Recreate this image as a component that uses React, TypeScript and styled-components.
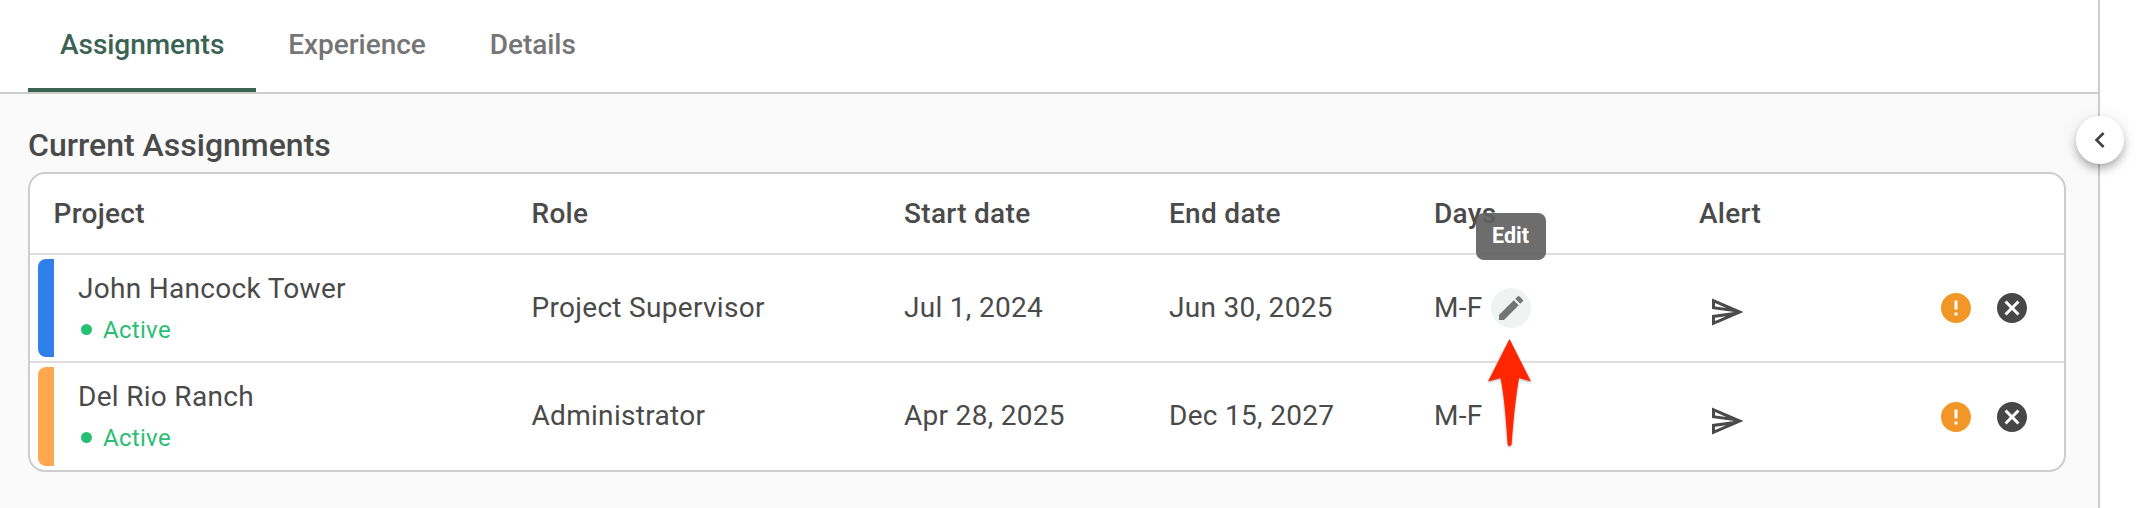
import React from 'react';
import styled, { createGlobalStyle } from 'styled-components';
import { MdCancel, MdChevronLeft, MdEdit, MdError, MdOutlineSend } from 'react-icons/md';

const GlobalStyle = createGlobalStyle`
  *, *::before, *::after { box-sizing: border-box; }
  body { margin: 0; background: #fff; font-family: Roboto, "Liberation Sans", sans-serif; color: #4a4a4a; }
  button { border: 0; padding: 0; margin: 0; background: none; font: inherit; color: inherit; }
  svg { display: block; flex: none; }
`;

const Page = styled.div`
  display: flex;
  width: 2136px;
  height: 508px;
  overflow: hidden;
`;

const Panel = styled.main`
  display: flex;
  flex-direction: column;
  width: 2100px;
  border-right: 2px solid #cdcdcd;
  background: #fafafa;
`;

const Rail = styled.aside`
  position: relative;
  flex: 1;
  background: #fff;
`;

const CollapseButton = styled.button`
  position: absolute;
  top: 116px;
  left: -24px;
  display: flex;
  align-items: center;
  justify-content: center;
  width: 48px;
  height: 48px;
  border-radius: 50%;
  background: #fff;
  color: #424242;
  box-shadow: 0 6px 10px -2px rgba(0, 0, 0, 0.2), 0 4px 10px rgba(0, 0, 0, 0.14), 0 2px 20px rgba(0, 0, 0, 0.08);
`;

const Tabs = styled.nav`
  display: flex;
  height: 94px;
  padding-left: 28px;
  border-bottom: 2px solid #cdcdcd;
  background: #fff;
`;

const Tab = styled.button<{ $active?: boolean }>`
  padding: 2px 32px 0;
  border-bottom: 4px solid ${(p) => (p.$active ? '#3b6353' : 'transparent')};
  color: ${(p) => (p.$active ? '#3b6353' : '#757575')};
  font-size: 28px;
  font-weight: 500;
  line-height: 86px;
  letter-spacing: -0.04px;
`;

const Section = styled.section`
  padding: 32px 32px 0 28px;
`;

const Heading = styled.h2`
  margin: 0 0 6px;
  height: 40px;
  font-size: 32px;
  font-weight: 500;
  line-height: 38px;
`;

const Table = styled.div`
  width: 2038px;
  border: 2px solid #cdcdcd;
  border-radius: 17px;
  background: #fff;
`;

const Row = styled.div<{ $height: number }>`
  display: grid;
  grid-template-columns: 501.5px 372.5px 265px 265px 265px 1fr;
  height: ${(p) => p.$height}px;
  font-size: 28px;
  letter-spacing: 0.3px;

  & + & { border-top: 2px solid #dedede; }
`;

const Cell = styled.div`
  display: flex;
  align-items: center;
  gap: 8px;
`;

const Value = styled.span`
  padding-bottom: 2px;
`;

const HeaderCell = styled(Cell)`
  font-weight: 500;

  &:first-child { padding-left: 23.5px; }
`;

const ProjectCell = styled.div`
  display: flex;
  padding: 4px 0 4px 8px;
`;

const ColorBar = styled.span<{ $color: string }>`
  width: 16px;
  border-radius: 8px 0 0 8px;
  background: ${(p) => p.$color};
`;

const ProjectText = styled.div`
  display: flex;
  flex-direction: column;
  padding: 10px 0 0 24px;
`;

const ProjectName = styled.span`
  line-height: 40px;
`;

const Status = styled.span`
  display: flex;
  align-items: center;
  gap: 11px;
  padding-left: 3px;
  color: #2bbd76;
  font-size: 24px;
  line-height: 42px;

  &::before {
    content: '';
    width: 11px;
    height: 11px;
    margin-bottom: 2px;
    border-radius: 50%;
    background: #26c074;
  }
`;

const EditButton = styled.button`
  position: relative;
  display: flex;
  align-items: center;
  justify-content: center;
  width: 40px;
  height: 40px;
  border-radius: 50%;
  background: #eff3f1;
  color: #757575;
`;

const Tooltip = styled.span`
  position: absolute;
  left: -15px;
  top: -75px;
  width: 70px;
  height: 47px;
  border-radius: 8px;
  background: rgba(97, 97, 97, 0.92);
  color: #fff;
  font-size: 21.5px;
  font-weight: 700;
  line-height: 45px;
  letter-spacing: 0;
  text-align: center;
`;

const Pointer = styled.svg`
  position: absolute;
  left: -4.5px;
  top: 49px;
  overflow: visible;
  filter: drop-shadow(0 1px 1px rgba(0, 0, 0, 0.35));
`;

const ActionsCell = styled(Cell)`
  justify-content: space-between;
  padding-right: 34px;
`;

const SendButton = styled.button`
  padding: 8px 0 0 10px;
`;

const Actions = styled.div`
  display: flex;
  gap: 20px;
`;

const WarningIcon = styled(MdError)`
  color: #f29727;
`;

const RemoveIcon = styled(MdCancel)`
  color: #474747;
`;

type Assignment = {
  name: string;
  color: string;
  role: string;
  start: string;
  end: string;
  days: string;
  height: number;
  editing?: boolean;
};

const assignments: Assignment[] = [
  { name: 'John Hancock Tower', color: '#2f80e8', role: 'Project Supervisor', start: 'Jul 1, 2024', end: 'Jun 30, 2025', days: 'M-F', height: 108, editing: true },
  { name: 'Del Rio Ranch', color: '#ffa84f', role: 'Administrator', start: 'Apr 28, 2025', end: 'Dec 15, 2027', days: 'M-F', height: 109 },
];

const columns = ['Project', 'Role', 'Start date', 'End date', 'Days', 'Alert'];

function EditControl() {
  return (
    <EditButton aria-label="Edit days">
      <MdEdit size={32} />
      <Tooltip role="tooltip">Edit</Tooltip>
      <Pointer width="48" height="110" viewBox="0 0 48 110">
        <path
          d="M23.5 2 L45 44.5 L33 41 C30 58 27.5 82 25.6 107 Q25.4 109 23.5 109 Q21.8 109 21.6 107 C20 82 18 58 14.5 41 L2 44.5 Z"
          fill="#ff2600"
        />
      </Pointer>
    </EditButton>
  );
}

export default function App() {
  return (
    <>
      <GlobalStyle />
      <Page>
        <Panel>
          <Tabs>
            <Tab $active>Assignments</Tab>
            <Tab>Experience</Tab>
            <Tab>Details</Tab>
          </Tabs>
          <Section>
            <Heading>Current Assignments</Heading>
            <Table>
              <Row $height={79}>
                {columns.map((c) => (
                  <HeaderCell key={c}>{c}</HeaderCell>
                ))}
              </Row>
              {assignments.map((a) => (
                <Row key={a.name} $height={a.height}>
                  <ProjectCell>
                    <ColorBar $color={a.color} />
                    <ProjectText>
                      <ProjectName>{a.name}</ProjectName>
                      <Status>Active</Status>
                    </ProjectText>
                  </ProjectCell>
                  <Cell><Value>{a.role}</Value></Cell>
                  <Cell><Value>{a.start}</Value></Cell>
                  <Cell><Value>{a.end}</Value></Cell>
                  <Cell>
                    <Value>{a.days}</Value>
                    {a.editing && <EditControl />}
                  </Cell>
                  <ActionsCell>
                    <SendButton aria-label="Send alert">
                      <MdOutlineSend size={36} />
                    </SendButton>
                    <Actions>
                      <WarningIcon size={36} />
                      <RemoveIcon size={36} />
                    </Actions>
                  </ActionsCell>
                </Row>
              ))}
            </Table>
          </Section>
        </Panel>
        <Rail>
          <CollapseButton aria-label="Collapse panel">
            <MdChevronLeft size={32} />
          </CollapseButton>
        </Rail>
      </Page>
    </>
  );
}
